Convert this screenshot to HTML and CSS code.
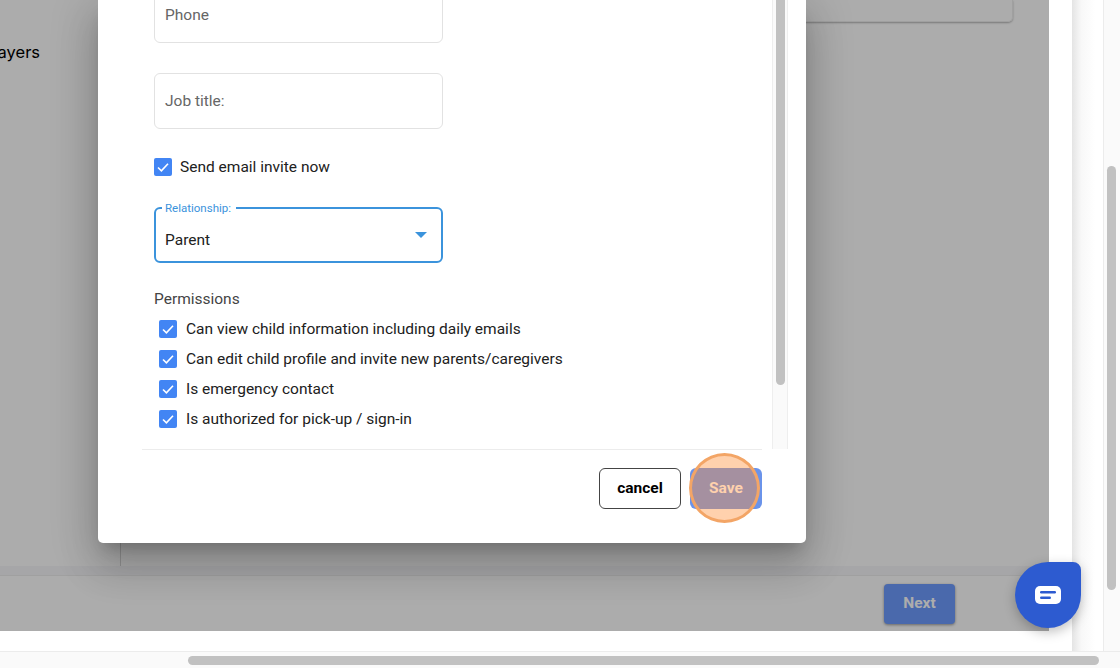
FILE: index.html
```html
<!DOCTYPE html>
<html lang="en">
<head>
    <meta charset="UTF-8">
    <meta name="viewport" content="width=device-width, initial-scale=1.0">
    <title>Add caregiver</title>
    <link rel="stylesheet" href="styles.css">
</head>
<body>

<div class="window">
    <div class="canvas">
        <div class="panel">
            <div class="panel-main">
                <div class="sidebar">
                    <p class="sidebar-item">Players</p>
                </div>
                <div class="content">
                    <div class="card"></div>
                </div>
            </div>
            <div class="band"></div>
            <div class="panel-footer">
                <button class="next-btn">Next</button>
            </div>
            <div class="dim"></div>
        </div>

        <!-- Dialog -->
        <div class="modal">
            <div class="modal-body">
                <div class="form">
                    <div class="field field-first">Phone</div>
                    <div class="field field-next">Job title:</div>

                    <div class="check-row send-row">
                        <span class="checkbox">
                            <svg viewBox="0 0 18 18"><path d="M4 9.5l3.4 3.4L14 5.8"/></svg>
                        </span>
                        <span class="send-label">Send email invite now</span>
                    </div>

                    <div class="select">
                        <span class="select-label">Relationship:</span>
                        <span class="select-value">Parent</span>
                        <span class="select-arrow"></span>
                    </div>

                    <p class="perm-title">Permissions</p>
                    <div class="perm-list">
                        <div class="check-row perm-row">
                            <span class="checkbox"><svg viewBox="0 0 18 18"><path d="M4 9.5l3.4 3.4L14 5.8"/></svg></span>
                            <span>Can view child information including daily emails</span>
                        </div>
                        <div class="check-row perm-row">
                            <span class="checkbox"><svg viewBox="0 0 18 18"><path d="M4 9.5l3.4 3.4L14 5.8"/></svg></span>
                            <span>Can edit child profile and invite new parents/caregivers</span>
                        </div>
                        <div class="check-row perm-row">
                            <span class="checkbox"><svg viewBox="0 0 18 18"><path d="M4 9.5l3.4 3.4L14 5.8"/></svg></span>
                            <span>Is emergency contact</span>
                        </div>
                        <div class="check-row perm-row">
                            <span class="checkbox"><svg viewBox="0 0 18 18"><path d="M4 9.5l3.4 3.4L14 5.8"/></svg></span>
                            <span>Is authorized for pick-up / sign-in</span>
                        </div>
                    </div>
                </div>
                <div class="modal-track"><div class="modal-thumb"></div></div>
            </div>
            <div class="modal-footer">
                <button class="cancel-btn">cancel</button>
                <button class="save-btn">Save<span class="highlight"></span></button>
            </div>
        </div>

        <!-- Chat launcher -->
        <div class="chat">
            <svg viewBox="0 0 26 18" width="26" height="18">
                <rect width="26" height="18" rx="5" fill="#fff"/>
                <rect x="5" y="5" width="16" height="2.4" rx="1.2" fill="#2d5bd0"/>
                <rect x="5" y="10.5" width="11" height="2.4" rx="1.2" fill="#2d5bd0"/>
            </svg>
        </div>
    </div>
    <div class="gutter"></div>
    <div class="vscroll"><div class="vscroll-thumb"></div></div>
</div>
<div class="hscroll"><div class="hscroll-thumb"></div></div>

</body>
</html>
```

FILE: styles.css
```css
* {
    box-sizing: border-box;
}

html, body {
    margin: 0;
    padding: 0;
    height: 668px;
    overflow: hidden;
}

body {
    font-family: 'Roboto', sans-serif;
    font-size: 15.5px;
    color: #212121;
    background-color: #fff;
}

button {
    font-family: 'Roboto', sans-serif;
    font-size: 15.5px;
    font-weight: 700;
    cursor: pointer;
}

.window {
    display: flex;
    height: 651px;
}

.canvas {
    position: relative;
    width: 1072px;
    flex-shrink: 0;
}

/* page behind the dialog */
.panel {
    position: relative;
    display: flex;
    flex-direction: column;
    width: 1049px;
    height: 631px;
    background-color: #fff;
}

.panel-main {
    display: flex;
    height: 566px;
}

.sidebar {
    width: 121px;
    border-right: 1px solid #d8d8d8;
    flex-shrink: 0;
}

.sidebar-item {
    margin: 40px 0 0 -17px;
    font-family: 'Inter', sans-serif;
    font-size: 16.5px;
    line-height: 24px;
    color: #000;
}

.content {
    flex: 1;
    padding-right: 36px;
}

.card {
    height: 22px;
    border-radius: 0 0 5px 5px;
    border: 1px solid #eee;
    border-top: none;
    box-shadow: 0 1px 2px rgba(0, 0, 0, 0.3);
}

.band {
    height: 9px;
    background-color: #f6f7fa;
}

.panel-footer {
    display: flex;
    justify-content: flex-end;
    flex: 1;
    padding: 8px 94px 0 0;
    border-top: 1px solid #eee;
}

.next-btn {
    width: 71px;
    height: 40px;
    padding: 0 0 2px;
    border: none;
    border-radius: 4px;
    color: #fff;
    background-color: #6e9cff;
    box-shadow: 0 1px 3px rgba(0, 0, 0, 0.4);
}

.dim {
    position: absolute;
    top: 0;
    left: 0;
    right: 0;
    bottom: 0;
    background-color: rgba(0, 0, 0, 0.325);
}

/* dialog */
.modal {
    position: absolute;
    top: 0;
    left: 98px;
    width: 708px;
    height: 543px;
    padding-left: 44px;
    background-color: #fff;
    border-radius: 0 0 5px 5px;
    box-shadow: 0 11px 15px -7px rgba(0, 0, 0, 0.2), 0 24px 38px 3px rgba(0, 0, 0, 0.14), 0 9px 46px 8px rgba(0, 0, 0, 0.12);
}

.modal-body {
    display: flex;
    height: 450px;
}

.form {
    width: 620px;
    padding-left: 12px;
    border-bottom: 1px solid #ececec;
    overflow: hidden;
}

.field {
    display: flex;
    align-items: center;
    width: 289px;
    height: 56px;
    padding-left: 10px;
    border: 1.5px solid #e2e2e2;
    border-radius: 6px;
    color: #666;
}

.field-first {
    margin-top: -13px;
}

.field-next {
    margin-top: 30px;
}

.check-row {
    display: flex;
    align-items: center;
}

.send-row {
    margin-top: 29px;
    height: 18px;
}

.send-label {
    margin-left: 8px;
}

.checkbox {
    display: block;
    width: 18px;
    height: 18px;
    background-color: #4285f4;
    border-radius: 2px;
    flex-shrink: 0;
}

.checkbox svg {
    display: block;
    width: 18px;
    height: 18px;
    fill: none;
    stroke: #fff;
    stroke-width: 1.6;
}

.select {
    position: relative;
    width: 289px;
    height: 56px;
    margin-top: 31px;
    border: 2px solid #3b93dc;
    border-radius: 6px;
}

.select-label {
    position: absolute;
    top: -9px;
    left: 6px;
    padding: 0 5px 0 3px;
    font-size: 11.5px;
    line-height: 16px;
    color: #3b93dc;
    background-color: #fff;
}

.select-value {
    position: absolute;
    top: 21px;
    left: 9px;
    line-height: 20px;
}

.select-arrow {
    position: absolute;
    top: 23px;
    right: 14px;
    border-left: 6px solid transparent;
    border-right: 6px solid transparent;
    border-top: 6px solid #3b93dc;
}

.perm-title {
    margin: 26px 0 0;
    line-height: 20px;
    color: #444;
}

.perm-list {
    margin-top: 5px;
    padding-left: 5px;
}

.perm-row {
    height: 30px;
    gap: 9px;
}

.modal-track {
    width: 16px;
    margin-left: 10px;
    height: 449px;
    background-color: #fafafa;
    border-left: 1px solid #eee;
    border-right: 1px solid #eee;
}

.modal-thumb {
    width: 9px;
    height: 385px;
    margin-left: 3px;
    background-color: #c1c1c1;
    border-radius: 0 0 5px 5px;
}

.modal-footer {
    display: flex;
    justify-content: flex-end;
    gap: 9px;
    padding: 18px 44px 0 0;
}

.cancel-btn {
    width: 82px;
    height: 41px;
    padding: 0 0 1px;
    color: #000;
    background-color: #fff;
    border: 1px solid #444;
    border-radius: 6px;
}

.save-btn {
    position: relative;
    width: 72px;
    height: 41px;
    padding: 0 0 2px;
    color: #fff;
    background-color: #6a93ea;
    border: none;
    border-radius: 6px;
}

.highlight {
    position: absolute;
    top: -15px;
    left: -1px;
    width: 71px;
    height: 70px;
    border: 3px solid #f3a566;
    border-radius: 50%;
    background-color: rgba(255, 140, 50, 0.4);
}

/* chat launcher */
.chat {
    position: absolute;
    top: 562px;
    left: 1015px;
    display: flex;
    align-items: center;
    justify-content: center;
    width: 66px;
    height: 66px;
    background-color: #2d5bd0;
    border-radius: 50% 8px 50% 50%;
    box-shadow: 0 4px 12px rgba(0, 0, 0, 0.25);
}

/* browser scrollbars */
.gutter {
    width: 31px;
    background: linear-gradient(to right, #e4e4e4, #f8f8f8 30%, #fff 75%);
}

.vscroll {
    flex: 1;
    background-color: #fafafa;
    border-left: 1px solid #ececec;
    padding: 166px 0 0 3px;
}

.vscroll-thumb {
    width: 9px;
    height: 424px;
    background-color: #c1c1c1;
    border-radius: 5px;
}

.hscroll {
    height: 17px;
    padding: 4px 0 0 188px;
    background-color: #fafafa;
    border-top: 1px solid #ececec;
}

.hscroll-thumb {
    width: 911px;
    height: 9px;
    background-color: #c1c1c1;
    border-radius: 5px;
}
```
